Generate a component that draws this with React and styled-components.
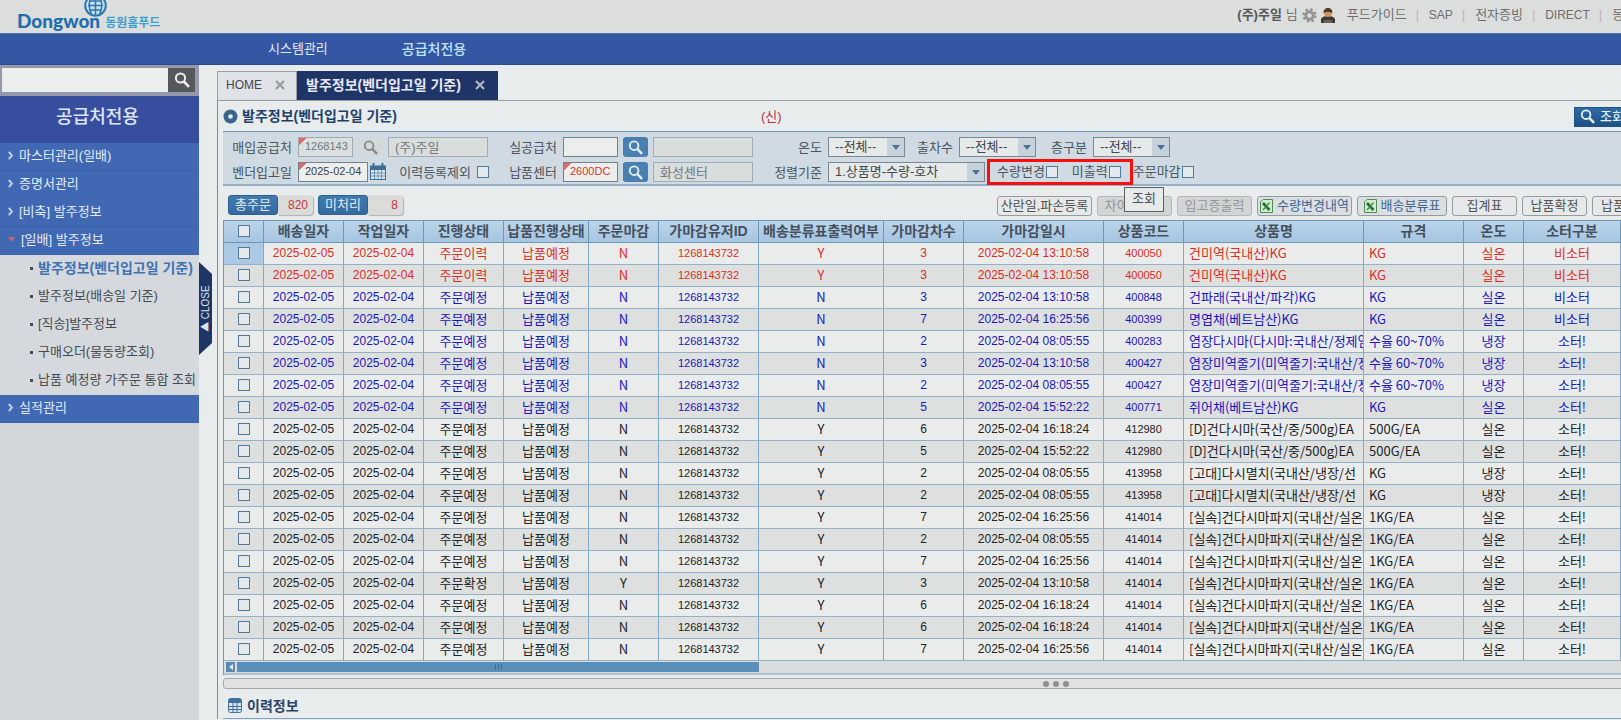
import React from "react";
import styled, { createGlobalStyle, css } from "styled-components";

const GlobalStyle = createGlobalStyle`
  * { box-sizing: border-box; }
  body {
    margin: 0;
    background: #e9ecec;
    color: #4a5560;
    font: 13px/18px "Liberation Sans", "Noto Sans CJK KR", sans-serif;
  }
  button, input, select { font: inherit; color: inherit; margin: 0; }
  button { cursor: pointer; padding: 0; }
  a { color: inherit; text-decoration: none; }
  ul { list-style: none; margin: 0; padding: 0; }
  h1, h2 { margin: 0; }
`;

const Viewport = styled.div`
  overflow: hidden;
  min-height: 100vh;
  display: flex;
`;

/* The workspace is wider than the window; the rest lies past its right edge. */
const Page = styled.div`
  flex: none;
  width: calc(100% + 274px);
  display: flex;
  flex-direction: column;
`;

const TopBar = styled.header`
  height: 33px;
  background: #dcdedd;
  display: flex;
  justify-content: space-between;
  padding: 0 223px 0 17px;
`;

const Logo = styled.a`
  position: relative;
  display: flex;
  align-items: flex-end;
  gap: 5px;
  height: 33px;
  white-space: nowrap;
`;

const LogoName = styled.span`
  font: 900 19px/24px Lato, sans-serif;
  color: #1f6cae;
`;

const LogoSub = styled.span`
  font-size: 12px;
  line-height: 20px;
  font-weight: bold;
  color: #3d9fd0;
`;

const Globe = styled.svg`
  position: absolute;
  left: 67px;
  top: -6px;
`;

const TopLinks = styled.nav`
  display: flex;
  align-items: center;
  height: 30px;
  color: #6d6f70;
  font-size: 13px;
  white-space: nowrap;
  a + a {
    display: flex;
    gap: 10px;
    margin-left: 9px;
  }
  a + a::before { content: "|"; color: #b4b6b6; }
`;

const UserName = styled.span`
  display: flex;
  align-items: center;
  gap: 4px;
  margin-right: 12px;
  strong { color: #55585a; }
`;

const TopLink = styled.a`
  font-size: ${(p) => (p.$latin ? "12px" : "13px")};
`;

const MainNav = styled.nav`
  height: 32px;
  background: #3457a3;
  border-top: 1px solid #4a73bd;
  border-bottom: 1px solid #2b4a92;
  display: flex;
  align-items: center;
  padding-left: 268px;
  gap: 74px;
  line-height: 30px;
`;

const NavLink = styled.a`
  font-size: ${(p) => (p.$active ? "14px" : "13px")};
  font-weight: ${(p) => (p.$active ? 500 : 400)};
  color: ${(p) => (p.$active ? "#bfe4ff" : "#e3eaf3")};
`;

const Body = styled.div`
  flex: 1;
  display: flex;
`;

const Sidebar = styled.aside`
  position: relative;
  width: 199px;
  flex: none;
  background: #d2d6d9;
`;

const SearchBox = styled.form`
  height: 31px;
  background: #9599a9;
  padding: 3px 4px 4px 2px;
  display: flex;
`;

const SearchInput = styled.input`
  flex: 1;
  min-width: 0;
  border: 0;
  background: #eceeed;
  padding: 0 4px;
`;

const SearchButton = styled.button`
  width: 27px;
  border: 0;
  background: #56585c;
  color: #eceeee;
  display: grid;
  place-items: center;
`;

const SideTitle = styled.h2`
  height: 47px;
  background: #374e9f;
  color: #dfe6fa;
  font-size: 18px;
  font-weight: 500;
  line-height: 42px;
  text-align: center;
  padding-right: 4px;
`;

const MenuLink = styled.a`
  display: flex;
  align-items: center;
  gap: 6px;
  height: 28px;
  padding: 0 0 2px 8px;
  background: #4168b3;
  border-bottom: 1px solid #3d64b0;
  color: #e3ebf7;
  white-space: nowrap;
`;

const SubMenu = styled.ul`
  background: #d5d9de;
`;

const SubLink = styled.a`
  display: flex;
  align-items: center;
  gap: 5px;
  height: 28px;
  padding: 0 0 2px 30px;
  overflow: hidden;
  white-space: nowrap;
  color: ${(p) => (p.$active ? "#3f73b3" : "#454a50")};
  font-size: ${(p) => (p.$active ? "14px" : "13px")};
  font-weight: ${(p) => (p.$active ? "bold" : "normal")};
  &::before {
    content: "";
    flex: none;
    width: 3px;
    height: 3px;
    background: #444a55;
  }
`;

const CloseHandle = styled.button`
  position: absolute;
  left: 199px;
  top: 197px;
  width: 13px;
  height: 93px;
  border: 0;
  background: #1f3566;
  clip-path: polygon(0 0, 100% 13%, 100% 87%, 0 100%);
  color: #dde3ee;
  font-size: 10px;
  line-height: 13px;
  writing-mode: vertical-rl;
  span { display: block; transform: rotate(180deg); height: 93px; text-align: center; }
`;

const Main = styled.main`
  flex: 1;
  min-width: 0;
  margin-left: 18px;
  padding-top: 6px;
`;

const Tabs = styled.div`
  display: flex;
  height: 29px;
`;

const Tab = styled.div`
  display: flex;
  align-items: center;
  gap: ${(p) => (p.$active ? "14px" : "13px")};
  padding: 0 ${(p) => (p.$active ? "12px" : "11px")} 3px 8px;
  border: 1px solid ${(p) => (p.$active ? "#1d3468" : "#9ba0a6")};
  border-bottom: 0;
  background: ${(p) => (p.$active ? "#1f3568" : "#dfe2e7")};
  color: ${(p) => (p.$active ? "#e8e8f4" : "#42474e")};
  font-size: ${(p) => (p.$active ? "14px" : "12px")};
  font-weight: ${(p) => (p.$active ? "bold" : "normal")};
  white-space: nowrap;
`;

const TabClose = styled.button`
  border: 0;
  background: none;
  color: ${(p) => (p.$active ? "#b5bac6" : "#94989c")};
  display: grid;
`;

const Panel = styled.section`
  border-top: 1px solid #9b9c9c;
  border-left: 1px solid #85898c;
  padding-left: 5px;
`;

const TitleRow = styled.div`
  display: flex;
  align-items: center;
  height: 30px;
  color: #22416c;
  h1 { font-size: 14px; margin-left: 4px; width: 519px; white-space: nowrap; }
`;

const Notice = styled.span`
  color: #b5343c;
  flex: 1;
  padding-top: 2px;
`;

const QueryButton = styled.button`
  width: 70px;
  height: 20px;
  margin: 1px 251px 0 0;
  border: 1px solid #1e5287;
  background: linear-gradient(#2f6ca4, #1c4f85);
  color: #e6eef6;
  font-weight: 500;
  display: flex;
  align-items: center;
  gap: 5px;
  padding-left: 5px;
`;

const Filters = styled.form`
  display: grid;
  grid-template-columns: 265px 265px 1fr;
  row-gap: 5px;
  padding: 5px 0 2px 5px;
  border-top: 1px solid #6d93b9;
  border-bottom: 2px solid #94b1c9;
  background: #cfdae2;
`;

const Field = styled.div`
  display: flex;
  align-items: center;
  height: 20px;
`;

const Label = styled.label`
  width: ${(p) => p.$w || 64}px;
  margin-right: 6px;
  padding-top: 2px;
  text-align: right;
  white-space: nowrap;
  color: #4a5560;
`;

const TextInput = styled.input`
  width: ${(p) => p.$w}px;
  height: 20px;
  padding: 0 0 2px 6px;
  border: 1px solid ${(p) => (p.disabled ? "#a3abb1" : "#73818d")};
  background: ${(p) =>
    p.$required
      ? `linear-gradient(135deg, #dd6a6c 5px, ${p.disabled ? "#dbdfe0" : "#eceeee"} 5px)`
      : p.disabled
      ? "#d9dddd"
      : "#eceeee"};
  color: ${(p) => (p.$red ? "#d8342a" : p.disabled ? "#73787c" : "#3b3f44")};
  font-size: ${(p) => p.$size || 13}px;
`;

const IconButton = styled.button`
  width: 25px;
  height: 20px;
  margin: 0 5px;
  border: 0;
  border-radius: 3px;
  background: ${(p) => (p.$plain ? "#d2d8db" : "#4a7fb2")};
  color: ${(p) => (p.$plain ? "#85898b" : "#e5eff7")};
  display: grid;
  place-items: center;
`;

const DateButton = styled.button`
  width: 20px;
  height: 20px;
  border: 0;
  background: none;
  display: grid;
  place-items: center;
`;

const SelectBox = styled.span`
  position: relative;
  width: ${(p) => p.$w}px;
  height: 20px;
  &::after {
    content: "";
    position: absolute;
    right: 5px;
    top: 8px;
    border: 4px solid transparent;
    border-top: 5px solid #4d7394;
    border-bottom: 0;
    pointer-events: none;
  }
`;

const Select = styled.select`
  appearance: none;
  display: block;
  width: 100%;
  height: 20px;
  padding: 0 18px 2px 6px;
  border: 1px solid #7c8791;
  border-radius: 0;
  color: #42474c;
  background: linear-gradient(to left, #c6d2dc 17px, #e6e9e9 17px);
`;

const Check = styled.input.attrs({ type: "checkbox" })`
  appearance: none;
  display: block;
  flex: none;
  width: 12px;
  height: 12px;
  margin: 0;
  border: 1px solid #54789a;
  background: #e4eaec;
`;

const CheckLabel = styled.label`
  display: flex;
  align-items: center;
  gap: 1px;
  white-space: nowrap;
  color: #4a5560;
`;

const Marked = styled.span`
  position: relative;
  display: flex;
  gap: 14px;
  margin-left: 2px;
  padding: 0 12px 0 10px;
  &::after {
    content: "";
    position: absolute;
    inset: -4px 0;
    border: 3px solid #fb0d0d;
    pointer-events: none;
  }
`;

const ActionRow = styled.div`
  display: flex;
  align-items: flex-start;
  height: 34px;
  padding: 9px 213px 0 5px;
`;

const Count = styled.div`
  display: flex;
  height: 20px;
  margin-right: 5px;
`;

const CountLabel = styled.span`
  width: 50px;
  border: 1px solid #2c5f93;
  border-radius: 3px;
  background: linear-gradient(#427ab0, #356a9f);
  color: #e2ebf3;
  text-align: center;
`;

const CountValue = styled.output`
  width: 35px;
  padding-right: 5px;
  border-radius: 0 4px 4px 0;
  background: #dbdbd9;
  box-shadow: 1px 1px 1px #b0b2b2;
  color: #c9343a;
  font-size: 12px;
  line-height: 20px;
  text-align: right;
`;

const Actions = styled.div`
  display: flex;
  gap: 5px;
  margin: 1px 0 0 auto;
`;

const ActionSlot = styled.div`
  position: relative;
`;

const ActionButton = styled.button`
  display: flex;
  align-items: center;
  justify-content: center;
  gap: 4px;
  width: ${(p) => p.$w}px;
  height: 20px;
  border: 1px solid ${(p) => (p.disabled ? "#b4b7b8" : "#969b9f")};
  border-radius: 3px;
  background: ${(p) => (p.disabled ? "#d3d5d5" : p.$excel ? "#d9dfe2" : "#e7e9e8")};
  color: ${(p) => (p.disabled ? "#929698" : p.$excel ? "#40688f" : "#4c5155")};
  white-space: nowrap;
`;

const Tooltip = styled.span`
  position: absolute;
  left: 27px;
  top: -9px;
  width: 40px;
  height: 25px;
  border: 1px solid #5c6063;
  background: #e8eaea;
  color: #4c5053;
  line-height: 22px;
  text-align: center;
  z-index: 2;
`;

const GridWrap = styled.div`
  border: 1px solid #6f97b8;
  border-width: 1px 0 0 1px;
`;

const Grid = styled.table`
  table-layout: fixed;
  width: 1397px;
  border-spacing: 0;
`;

const cell = css`
  height: 22px;
  padding: 0 0 1px;
  border-right: 1px solid #86a9c3;
  border-bottom: 1px solid #93b1c8;
  line-height: 18px;
  overflow: hidden;
  white-space: nowrap;
`;

const HeadCell = styled.th`
  ${cell}
  border-color: #6f97b8;
  background: linear-gradient(#bcd5ea, #a6c5e1);
  color: #44505d;
  font-size: 14px;
  font-weight: bold;
  ${Check} { margin: 0 auto; }
`;

const Row = styled.tr`
  color: ${(p) => ({ red: "#dc2c22", blue: "#1a17b8", black: "#202326" }[p.$tone])};
  background: #e9eceb;
  &:nth-child(even) { background: #dee0e0; }
`;

const Cell = styled.td`
  ${cell}
  text-align: ${(p) => (p.$left ? "left" : "center")};
  padding-left: ${(p) => (p.$left ? "5px" : "0")};
  font-family: "Noto Sans CJK KR", sans-serif;
  background: ${(p) => (p.$marked ? "#abc9e5" : "none")};
  ${Check} { margin: 0 auto; }
`;

const NumberCell = styled(Cell)`
  font-family: "Liberation Sans", sans-serif;
  font-size: ${(p) => (p.$code ? "11px" : "12px")};
`;

const ScrollTrack = styled.div`
  display: flex;
  gap: 2px;
  height: 14px;
  padding: 1px 0 1px 2px;
  background: #dadddd;
  border-bottom: 2px solid #b1c3d2;
`;

const ScrollArrow = styled.button`
  width: 9px;
  border: 0;
  background: #5d88ae;
  display: grid;
  place-items: center;
`;

const ScrollThumb = styled.div`
  width: 522px;
  background: #5b8fbb;
  display: flex;
  justify-content: center;
  align-items: center;
  gap: 2px;
  i { width: 1px; height: 6px; background: #3e6c94; }
`;

const Splitter = styled.div`
  display: flex;
  align-items: center;
  justify-content: center;
  gap: 4px;
  height: 11px;
  margin: 3px 6px 0 0;
  border: 1px solid #a9acac;
  border-radius: 3px;
  background: #e0e2e1;
  i { width: 6px; height: 6px; border-radius: 50%; background: #8d9090; }
`;

const HistoryTitle = styled.h2`
  display: flex;
  align-items: center;
  gap: 5px;
  height: 30px;
  padding: 4px 0 0 5px;
  border-bottom: 1px solid #7fa3c0;
  color: #2b4468;
  font-size: 14px;
`;

const SearchIcon = ({ size = 16, w = 2 }) => (
  <svg width={size} height={size} viewBox="0 0 16 16" fill="none" stroke="currentColor" strokeWidth={w} aria-hidden="true">
    <circle cx="6.5" cy="6" r="4.6" />
    <path d="M9.8 9.5 15 14.8" strokeWidth={w + 0.6} />
  </svg>
);

const CloseIcon = () => (
  <svg width="10" height="10" viewBox="0 0 10 10" stroke="currentColor" strokeWidth="2" aria-hidden="true">
    <path d="M1 1l8 8M9 1L1 9" />
  </svg>
);

const GearIcon = () => (
  <svg width="15" height="15" viewBox="0 0 16 16" fill="none" stroke="#929594" aria-hidden="true">
    <circle cx="8" cy="8" r="4" strokeWidth="3" />
    <circle cx="8" cy="8" r="6.4" strokeWidth="2.6" strokeDasharray="2.6 2.42" />
  </svg>
);

const PersonIcon = () => (
  <svg width="14" height="15" viewBox="0 0 14 15" aria-hidden="true">
    <path d="M0 15v-3c0-3 3-4 7-4s7 1 7 4v3z" fill="#3c3833" />
    <path d="M3 12h8v3H3z" fill="#6a635a" />
    <circle cx="7" cy="5" r="4" fill="#c99a5f" />
    <path d="M2.6 5C2.4 1.5 4.4 0 7 0s4.600 1.500 4.400 5C10 3.500 4 3.500 2.600 5z" fill="#54371f" />
  </svg>
);

const Chevron = () => (
  <svg width="5" height="9" viewBox="0 0 5 9" fill="none" stroke="#b9d0ee" strokeWidth="2" aria-hidden="true">
    <path d="M.8.8 4 4.500.8 8.200" />
  </svg>
);

const OpenMark = () => (
  <svg width="7" height="5" viewBox="0 0 7 5" fill="#c4646e" aria-hidden="true">
    <path d="M0 0h7L3.500 5z" />
  </svg>
);

const TitleDot = () => (
  <svg width="15" height="15" viewBox="0 0 15 15" aria-hidden="true">
    <circle cx="7.5" cy="7.5" r="7" fill="#38668f" />
    <circle cx="7.5" cy="7.5" r="2.300" fill="#e8eef2" />
  </svg>
);

const CalendarIcon = () => (
  <svg width="18" height="18" viewBox="0 0 18 18" fill="none" stroke="#3f6d96" aria-hidden="true">
    <rect x="1.500" y="3" width="15" height="13.500" fill="#dce7ee" />
    <path d="M1 5h16" strokeWidth="4" />
    <path d="M4.500 0v4M13.500 0v4" strokeWidth="2" />
    <path d="M2 10h14M2 13h14M5.500 7v9M9 7v9M12.500 7v9" stroke="#6d93b3" />
  </svg>
);

const ExcelIcon = () => (
  <svg width="13" height="14" viewBox="0 0 13 14" aria-hidden="true">
    <path d="M3 .5h9.500v13H.5V3z" fill="#d5e8d3" stroke="#4f8a52" />
    <path d="M3 4l6.500 7" stroke="#20702c" strokeWidth="2.600" />
    <path d="M9.500 3.500 3 11" stroke="#3d9447" strokeWidth="1.500" />
  </svg>
);

const GridIcon = () => (
  <svg width="14" height="15" viewBox="0 0 14 15" fill="none" stroke="#416f9d" aria-hidden="true">
    <rect x=".5" y=".5" width="13" height="14" rx="2" fill="#dbe6ee" />
    <path d="M1 3h12" strokeWidth="4" />
    <path d="M1 8.500h12M1 11.500h12M5 5v9M9 5v9" />
  </svg>
);

const COLUMNS = [
  ["배송일자", 80], ["작업일자", 80], ["진행상태", 80], ["납품진행상태", 85],
  ["주문마감", 70], ["가마감유저ID", 100], ["배송분류표출력여부", 125], ["가마감차수", 80],
  ["가마감일시", 140], ["상품코드", 80], ["상품명", 180], ["규격", 100], ["온도", 60], ["소터구분", 97],
];

const T1 = "13:10:58", T2 = "16:25:56", T3 = "08:05:55", T4 = "15:52:22", T5 = "16:18:24";
const KELP = "[실속]건다시마파지(국내산/실온)1KG";
const STEM = "염장미역줄기(미역줄기:국내산/정제염)";

const ROWS = [
  ["red", "주문이력", "N", "Y", 3, T1, "400050", "건미역(국내산)KG", "KG", "실온", "비소터"],
  ["red", "주문이력", "N", "Y", 3, T1, "400050", "건미역(국내산)KG", "KG", "실온", "비소터"],
  ["blue", "주문예정", "N", "N", 3, T1, "400848", "건파래(국내산/파각)KG", "KG", "실온", "비소터"],
  ["blue", "주문예정", "N", "N", 7, T2, "400399", "명엽채(베트남산)KG", "KG", "실온", "비소터"],
  ["blue", "주문예정", "N", "N", 2, T3, "400283", "염장다시마(다시마:국내산/정제염)", "수율 60~70%", "냉장", "소터!"],
  ["blue", "주문예정", "N", "N", 3, T1, "400427", STEM, "수율 60~70%", "냉장", "소터!"],
  ["blue", "주문예정", "N", "N", 2, T3, "400427", STEM, "수율 60~70%", "냉장", "소터!"],
  ["blue", "주문예정", "N", "N", 5, T4, "400771", "쥐어채(베트남산)KG", "KG", "실온", "소터!"],
  ["black", "주문예정", "N", "Y", 6, T5, "412980", "[D]건다시마(국산/중/500g)EA", "500G/EA", "실온", "소터!"],
  ["black", "주문예정", "N", "Y", 5, T4, "412980", "[D]건다시마(국산/중/500g)EA", "500G/EA", "실온", "소터!"],
  ["black", "주문예정", "N", "Y", 2, T3, "413958", "[고대]다시멸치(국내산/냉장/선", "KG", "냉장", "소터!"],
  ["black", "주문예정", "N", "Y", 2, T3, "413958", "[고대]다시멸치(국내산/냉장/선", "KG", "냉장", "소터!"],
  ["black", "주문예정", "N", "Y", 7, T2, "414014", KELP, "1KG/EA", "실온", "소터!"],
  ["black", "주문예정", "N", "Y", 2, T3, "414014", KELP, "1KG/EA", "실온", "소터!"],
  ["black", "주문예정", "N", "Y", 7, T2, "414014", KELP, "1KG/EA", "실온", "소터!"],
  ["black", "주문확정", "Y", "Y", 3, T1, "414014", KELP, "1KG/EA", "실온", "소터!"],
  ["black", "주문예정", "N", "Y", 6, T5, "414014", KELP, "1KG/EA", "실온", "소터!"],
  ["black", "주문예정", "N", "Y", 6, T5, "414014", KELP, "1KG/EA", "실온", "소터!"],
  ["black", "주문예정", "N", "Y", 7, T2, "414014", KELP, "1KG/EA", "실온", "소터!"],
];

const SUB_ITEMS = ["발주정보(벤더입고일 기준)", "발주정보(배송일 기준)", "[직송]발주정보", "구매오더(물동량조회)", "납품 예정량 가주문 통합 조회"];

function Dropdown({ id, w, children }) {
  return (
    <SelectBox $w={w}>
      <Select id={id}><option>{children}</option></Select>
    </SelectBox>
  );
}

export default function App() {
  return (
    <Viewport>
      <GlobalStyle />
      <Page>
        <TopBar>
          <Logo href="#">
            <Globe width="23" height="23" viewBox="0 0 23 23" fill="none" stroke="#2b78b2" strokeWidth="2">
              <circle cx="11.5" cy="11.5" r="10.300" fill="#c9dfea" />
              <path d="M11.500 1v21M5 7h13M4 11.500h15M5 16h13" strokeWidth="1.500" />
              <path d="M7.500 3C4.500 8 4.500 15 7.500 20M15.500 3c3 5 3 12 0 17" strokeWidth="1.500" />
            </Globe>
            <LogoName>Dongwon</LogoName>
            <LogoSub>동원홈푸드</LogoSub>
          </Logo>
          <TopLinks>
            <UserName><strong>(주)주일</strong>님 <GearIcon /><PersonIcon /></UserName>
            <TopLink href="#">푸드가이드</TopLink>
            <TopLink href="#" $latin>SAP</TopLink>
            <TopLink href="#">전자증빙</TopLink>
            <TopLink href="#" $latin>DIRECT</TopLink>
            <TopLink href="#">동원홈푸드</TopLink>
          </TopLinks>
        </TopBar>
        <MainNav>
          <NavLink href="#">시스템관리</NavLink>
          <NavLink href="#" $active>공급처전용</NavLink>
        </MainNav>
        <Body>
          <Sidebar>
            <SearchBox>
              <SearchInput aria-label="메뉴 검색" />
              <SearchButton type="button" aria-label="검색"><SearchIcon /></SearchButton>
            </SearchBox>
            <SideTitle>공급처전용</SideTitle>
            <ul>
              {["마스터관리(일배)", "증명서관리", "[비축] 발주정보"].map((t) => (
                <li key={t}><MenuLink href="#"><Chevron />{t}</MenuLink></li>
              ))}
              <li>
                <MenuLink href="#"><OpenMark />[일배] 발주정보</MenuLink>
                <SubMenu>
                  {SUB_ITEMS.map((t, i) => (
                    <li key={t}><SubLink href="#" $active={i === 0}>{t}</SubLink></li>
                  ))}
                </SubMenu>
              </li>
              <li><MenuLink href="#"><Chevron />실적관리</MenuLink></li>
            </ul>
            <CloseHandle type="button"><span>▶ CLOSE</span></CloseHandle>
          </Sidebar>
          <Main>
            <Tabs>
              <Tab>HOME<TabClose aria-label="닫기"><CloseIcon /></TabClose></Tab>
              <Tab $active>발주정보(벤더입고일 기준)<TabClose $active aria-label="닫기"><CloseIcon /></TabClose></Tab>
            </Tabs>
            <Panel>
              <TitleRow>
                <TitleDot />
                <h1>발주정보(벤더입고일 기준)</h1>
                <Notice>(신)</Notice>
                <QueryButton type="button"><SearchIcon size={15} />조회</QueryButton>
              </TitleRow>
              <Filters>
                <Field>
                  <Label htmlFor="buyer">매입공급처</Label>
                  <TextInput id="buyer" $w={55} $size={11} $required disabled defaultValue="1268143" />
                  <IconButton type="button" $plain aria-label="매입공급처 검색"><SearchIcon size={15} /></IconButton>
                  <TextInput $w={100} disabled aria-label="매입공급처명" defaultValue="(주)주일" />
                </Field>
                <Field>
                  <Label htmlFor="supplier">실공급처</Label>
                  <TextInput id="supplier" $w={55} />
                  <IconButton type="button" aria-label="실공급처 검색"><SearchIcon size={15} /></IconButton>
                  <TextInput $w={100} disabled aria-label="실공급처명" />
                </Field>
                <Field>
                  <Label htmlFor="temp">온도</Label>
                  <Dropdown id="temp" w={77}>--전체--</Dropdown>
                  <Label htmlFor="round" $w={48}>출차수</Label>
                  <Dropdown id="round" w={77}>--전체--</Dropdown>
                  <Label htmlFor="floor" $w={51}>층구분</Label>
                  <Dropdown id="floor" w={77}>--전체--</Dropdown>
                </Field>
                <Field>
                  <Label htmlFor="date">벤더입고일</Label>
                  <TextInput id="date" $w={70} $size={11} $required defaultValue="2025-02-04" />
                  <DateButton type="button" aria-label="날짜 선택"><CalendarIcon /></DateButton>
                  <Label htmlFor="hist" $w={83}>이력등록제외</Label>
                  <Check id="hist" />
                </Field>
                <Field>
                  <Label htmlFor="center">납품센터</Label>
                  <TextInput id="center" $w={55} $size={11} $required $red defaultValue="2600DC" />
                  <IconButton type="button" aria-label="납품센터 검색"><SearchIcon size={15} /></IconButton>
                  <TextInput $w={100} disabled aria-label="납품센터명" defaultValue="화성센터" />
                </Field>
                <Field>
                  <Label htmlFor="sort">정렬기준</Label>
                  <Dropdown id="sort" w={157}>1.상품명-수량-호차</Dropdown>
                  <Marked>
                    <CheckLabel>수량변경<Check /></CheckLabel>
                    <CheckLabel>미출력<Check /></CheckLabel>
                  </Marked>
                  <CheckLabel>주문마감<Check /></CheckLabel>
                </Field>
              </Filters>
              <ActionRow>
                <Count><CountLabel>총주문</CountLabel><CountValue>820</CountValue></Count>
                <Count><CountLabel>미처리</CountLabel><CountValue>8</CountValue></Count>
                <Actions>
                  <ActionButton $w={95}>산란일,파손등록</ActionButton>
                  <ActionSlot>
                    <ActionButton $w={75} disabled>차이분출력</ActionButton>
                    <Tooltip role="tooltip">조회</Tooltip>
                  </ActionSlot>
                  <ActionButton $w={75} disabled>입고증출력</ActionButton>
                  <ActionButton $w={95} $excel><ExcelIcon />수량변경내역</ActionButton>
                  <ActionButton $w={90} $excel><ExcelIcon />배송분류표</ActionButton>
                  <ActionButton $w={65}>집계표</ActionButton>
                  <ActionButton $w={65}>납품확정</ActionButton>
                  <ActionButton $w={90}>납품확정취소</ActionButton>
                </Actions>
              </ActionRow>
              <GridWrap>
                <Grid>
                  <colgroup>
                    <col width="40" />
                    {COLUMNS.map(([name, w]) => <col key={name} width={w} />)}
                  </colgroup>
                  <thead>
                    <tr>
                      <HeadCell><Check aria-label="전체 선택" /></HeadCell>
                      {COLUMNS.map(([name]) => <HeadCell key={name}>{name}</HeadCell>)}
                    </tr>
                  </thead>
                  <tbody>
                    {ROWS.map(([tone, state, closed, printed, round, time, code, item, spec, temp, sorter], i) => (
                      <Row key={i} $tone={tone}>
                        <Cell $marked={i === 0}><Check aria-label={`${i + 1}행 선택`} /></Cell>
                        <NumberCell>2025-02-05</NumberCell>
                        <NumberCell>2025-02-04</NumberCell>
                        <Cell>{state}</Cell>
                        <Cell>납품예정</Cell>
                        <Cell>{closed}</Cell>
                        <NumberCell $code>1268143732</NumberCell>
                        <Cell>{printed}</Cell>
                        <NumberCell>{round}</NumberCell>
                        <NumberCell>2025-02-04 {time}</NumberCell>
                        <NumberCell $code>{code}</NumberCell>
                        <Cell $left>{item}</Cell>
                        <Cell $left>{spec}</Cell>
                        <Cell>{temp}</Cell>
                        <Cell>{sorter}</Cell>
                      </Row>
                    ))}
                  </tbody>
                </Grid>
                <ScrollTrack>
                  <ScrollArrow type="button" aria-label="왼쪽으로">
                    <svg width="4" height="6" viewBox="0 0 4 6" fill="#e6eef4"><path d="M4 0v6L0 3z" /></svg>
                  </ScrollArrow>
                  <ScrollThumb><i /><i /><i /></ScrollThumb>
                </ScrollTrack>
              </GridWrap>
              <Splitter><i /><i /><i /></Splitter>
              <HistoryTitle><GridIcon />이력정보</HistoryTitle>
            </Panel>
          </Main>
        </Body>
      </Page>
    </Viewport>
  );
}
